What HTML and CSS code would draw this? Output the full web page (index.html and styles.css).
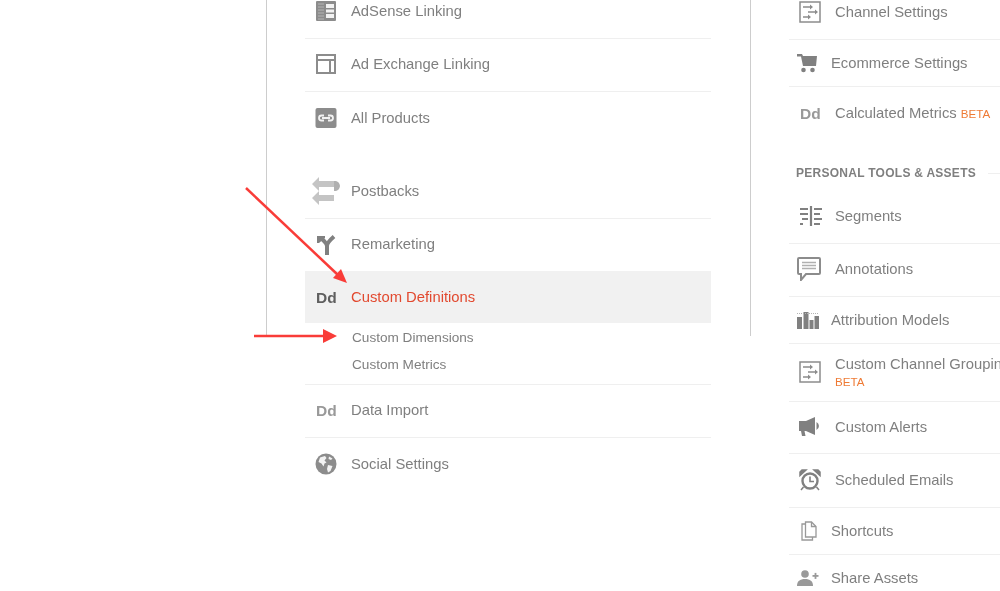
FILE: index.html
```html
<!DOCTYPE html>
<html>
<head>
    <title>Admin</title>
    <link rel="stylesheet" href="styles.css">
</head>
<body>
    <div class="page">
        <!-- property column -->
        <div class="panel">
            <div class="row">
                <span class="icon"><svg width="22" height="22" viewBox="0 0 22 22"><rect x="1" y="1" width="20" height="20" rx="1" fill="#8c8c8c"/><path d="M3 4h6M3 7h6M3 10h6M3 13h6M3 16h6M3 19h6" stroke="#b5b5b5"/><path d="M11 4h8v4h-8zM11 9.500h8v3h-8zM11 14h8v4h-8z" fill="#f2f2f2"/></svg></span>
                AdSense Linking
            </div>
            <div class="row">
                <span class="icon"><svg width="22" height="22" viewBox="0 0 22 22" fill="none" stroke="#8c8c8c" stroke-width="2"><rect x="2" y="2" width="18" height="18"/><path d="M2 7h18M15 7v13"/></svg></span>
                Ad Exchange Linking
            </div>
            <div class="row row-plain">
                <span class="icon"><svg width="22" height="22" viewBox="0 0 22 22"><rect x="0.500" y="1" width="21" height="20" rx="2" fill="#8c8c8c"/><path d="M9 8.500H6.500a2.500 2.500 0 0 0 0 5H9M13 8.500h2.500a2.500 2.500 0 0 1 0 5H13M7 11h8" fill="none" stroke="#f2f2f2" stroke-width="1.800"/></svg></span>
                All Products
            </div>
            <div class="row group-start">
                <span class="icon"><svg width="30" height="30" viewBox="0 0 30 30" fill="#c4c4c4"><path d="M1 8l7-7v4h15v6H8v4z"/><path d="M23 5h2a6 6 0 0 1 4 5 6 6 0 0 1-4 5h-2z" fill="#b0b0b0"/><path d="M1 22l7-7v4h15v6H8v4z"/></svg></span>
                Postbacks
            </div>
            <div class="row row-plain row-short">
                <span class="icon"><svg width="22" height="22" viewBox="0 0 22 22" fill="none" stroke="#808080" stroke-width="4"><path d="M12 22v-9c0-2-1-3-2.500-4.500L6 5"/><path d="M12 13c0-3 3-6 7-9.500"/><path d="M2 3h8v2l-6 5H2z" fill="#808080" stroke="none"/></svg></span>
                Remarketing
            </div>
            <div class="row row-plain row-short row-active">
                <span class="icon icon-text icon-dark">Dd</span>
                Custom Definitions
            </div>
            <div class="sub-list">
                <div class="sub-item">Custom Dimensions</div>
                <div class="sub-item">Custom Metrics</div>
            </div>
            <div class="row">
                <span class="icon icon-text">Dd</span>
                Data Import
            </div>
            <div class="row row-plain">
                <span class="icon"><svg width="22" height="22" viewBox="0 0 22 22"><circle cx="11" cy="11" r="10.500" fill="#8c8c8c"/><path d="M5 4.500l5-1.500 1.500 2-2 2.500 2 2-2 1-1 3-2-3-3-1.500zM13 12l4.500 1-2 5-2.500 1.500-1-3.500zM14 3.500l3.500 2-1.500 1.500-2.500-1z" fill="#f2f2f2"/></svg></span>
                Social Settings
            </div>
        </div>

        <!-- view column -->
        <div class="side">
            <div class="row row-side">
                <span class="icon"><svg width="22" height="22" viewBox="0 0 22 22" fill="none" stroke="#8c8c8c"><rect x="1" y="1" width="20" height="20" stroke-width="1.500"/><path d="M4 6h8M4 16h6M9 11h8" stroke-width="1.500"/><path d="M11 3.500l3 2.500-3 2.500zM9 13.500l3 2.500-3 2.500zM16 8.500l3 2.500-3 2.500z" fill="#8c8c8c" stroke="none"/></svg></span>
                Channel Settings
            </div>
            <div class="row row-side row-tight">
                <span class="icon"><svg width="20" height="20" viewBox="0 0 20 20" fill="#808080"><path d="M0 1h5l1 2h14l-1 10H6L4 3.500H0z"/><circle cx="6.500" cy="17" r="2.300"/><circle cx="15.500" cy="17" r="2.300"/></svg></span>
                Ecommerce Settings
            </div>
            <div class="row row-side row-plain">
                <span class="icon icon-text">Dd</span>
                <span>Calculated Metrics <span class="beta">BETA</span></span>
            </div>
            <div class="section-head">
                <span>PERSONAL TOOLS &amp; ASSETS</span>
                <span class="section-line"></span>
            </div>
            <div class="row row-side">
                <span class="icon"><svg width="24" height="22" viewBox="0 0 24 22" fill="none" stroke="#808080" stroke-width="2.200"><path d="M12 1v20"/><path d="M1 4h8M1 9h8M3 14h6M1 19h3M15 4h8M15 9h6M15 14h8M15 19h6"/></svg></span>
                Segments
            </div>
            <div class="row row-side">
                <span class="icon icon-shift"><svg width="24" height="24" viewBox="0 0 24 24"><path d="M2 1h20a1 1 0 0 1 1 1v14a1 1 0 0 1-1 1H9l-5 6v-6H2a1 1 0 0 1-1-1V2a1 1 0 0 1 1-1z" fill="none" stroke="#8c8c8c" stroke-width="2"/><path d="M5 5.500h14M5 8.500h14M5 11.500h14" stroke="#b0b0b0" stroke-width="1.600"/></svg></span>
                Annotations
            </div>
            <div class="row row-side row-tight">
                <span class="icon"><svg width="22" height="20" viewBox="0 0 22 20" fill="#808080"><path d="M0 7h5v12H0zM6.500 2h5v17h-5zM12.500 10h4v9h-4zM17.500 6h4.500v13h-4.500z"/><path d="M0 3.500h22" stroke="#b5b5b5" stroke-dasharray="1 1"/></svg></span>
                Attribution Models
            </div>
            <div class="row row-side row-double">
                <span class="icon"><svg width="22" height="22" viewBox="0 0 22 22" fill="none" stroke="#8c8c8c"><rect x="1" y="1" width="20" height="20" stroke-width="1.500"/><path d="M4 6h8M4 16h6M9 11h8" stroke-width="1.500"/><path d="M11 3.500l3 2.500-3 2.500zM9 13.500l3 2.500-3 2.500zM16 8.500l3 2.500-3 2.500z" fill="#8c8c8c" stroke="none"/></svg></span>
                <span class="double-text">Custom Channel Grouping<span class="beta">BETA</span></span>
            </div>
            <div class="row row-side row-short">
                <span class="icon"><svg width="22" height="20" viewBox="0 0 22 20" fill="#808080"><path d="M0 4h7v10H5.500l1 5H3l-1-5H0z"/><path d="M7 4l9-4v18l-9-4z"/><path d="M17.500 5a4.500 4.500 0 0 1 0 8z"/></svg></span>
                Custom Alerts
            </div>
            <div class="row row-side row-tall">
                <span class="icon"><svg width="22" height="22" viewBox="0 0 22 22"><circle cx="11" cy="12" r="7.500" fill="none" stroke="#808080" stroke-width="2.400"/><path d="M11 7.500v5h4" fill="none" stroke="#808080" stroke-width="1.600"/><path d="M1 6.500V3l2-2h4zM21 6.500V3l-2-2h-4zM4.500 18l-2.500 3M17.500 18l2.500 3" fill="#808080" stroke="#808080" stroke-width="1.500"/></svg></span>
                Scheduled Emails
            </div>
            <div class="row row-side row-tight">
                <span class="icon icon-inset"><svg width="16" height="20" viewBox="0 0 16 20" fill="none" stroke="#999" stroke-width="1.300"><path d="M4.500 1h6l4.500 4.500V16H4.500z"/><path d="M10.500 1v4.500H15"/><path d="M4.500 3H1v16h10.500v-3"/></svg></span>
                Shortcuts
            </div>
            <div class="row row-side row-tight row-plain row-last">
                <span class="icon"><svg width="22" height="16" viewBox="0 0 22 16" fill="#999"><circle cx="8" cy="4" r="3.800"/><path d="M0 16c0-5 3-7 8-7s8 2 8 7z"/><path d="M15.500 5h6v1.800h-6z"/><path d="M17.600 2.900h1.800v6h-1.800z"/></svg></span>
                Share Assets
            </div>
        </div>
    </div>

    <svg class="arrows" width="1000" height="591" viewBox="0 0 1000 591">
        <path d="M246 188L338 275" stroke="#f93c38" stroke-width="2.500"/>
        <path d="M347 283L333 278L341 269z" fill="#f93c38"/>
        <path d="M254 336H325" stroke="#f93c38" stroke-width="2.500"/>
        <path d="M323 329L337 336L323 343z" fill="#f93c38"/>
    </svg>
</body>
</html>
```

FILE: styles.css
```css
html, body {
    margin: 0;
    height: 591px;
    overflow: hidden;
    background-color: white;
}
body {
    position: relative;
    font-family: "Liberation Sans", Arial, sans-serif;
    font-size: 14.8px;
    color: #7f7f7f;
    filter: blur(0.35px);
}
.page {
    display: flex;
    width: 1100px;
    margin-top: -14px;
    padding-left: 266px;
}
.panel {
    box-sizing: border-box;
    flex: none;
    width: 485px;
    height: 350px;
    padding: 0 39px 0 38px;
    border-left: 1px solid #cdcdcd;
    border-right: 1px solid #cdcdcd;
}
.side {
    flex: none;
    width: 300px;
    margin-top: 1px;
    margin-left: 38px;
}
.row {
    box-sizing: border-box;
    display: flex;
    align-items: center;
    height: 53px;
    padding-left: 10px;
    padding-bottom: 2px;
    border-bottom: 1px solid #efefef;
    white-space: nowrap;
}
.row-plain {
    border-bottom: none;
}
.row-short {
    height: 52px;
}
.row-tall {
    height: 54px;
}
.group-start {
    margin-top: 21px;
}
.row-active {
    padding-bottom: 0;
    background-color: #f1f1f1;
    color: #e2492f;
}
.icon {
    display: flex;
    align-items: center;
    flex: none;
    width: 36px;
}
.icon-text {
    box-sizing: border-box;
    padding: 2px 0 0 1px;
    font-size: 15.5px;
    font-weight: bold;
    color: #999;
}
.icon-dark {
    color: #5f5f5f;
}
.group-start .icon svg {
    margin-left: -4px;
}
.sub-list {
    box-sizing: border-box;
    height: 62px;
    padding-left: 47px;
    padding-top: 1px;
    border-bottom: 1px solid #efefef;
}
.sub-item {
    height: 27px;
    line-height: 27px;
    font-size: 13.6px;
}
.row-tight {
    height: 47px;
    padding-left: 8px;
    padding-bottom: 0;
}
.row-tight .icon {
    width: 34px;
}
.row-last {
    padding-bottom: 2px;
}
.icon-shift svg {
    margin-left: -2px;
}
.icon-inset svg {
    margin-left: 4px;
}
.row-double {
    height: 58px;
}
.double-text {
    display: flex;
    flex-direction: column;
    gap: 3px;
}
.beta {
    font-size: 11.6px;
    color: #ee7a34;
}
.section-head {
    display: flex;
    align-items: center;
    gap: 12px;
    height: 18px;
    margin: 24px 0 9px;
    padding-left: 7px;
    font-size: 12px;
    font-weight: bold;
    letter-spacing: 0.27px;
    white-space: nowrap;
}
.section-line {
    flex: 1;
    height: 1px;
    background-color: #efefef;
}
.arrows {
    position: absolute;
    top: 0;
    left: 0;
}
```
